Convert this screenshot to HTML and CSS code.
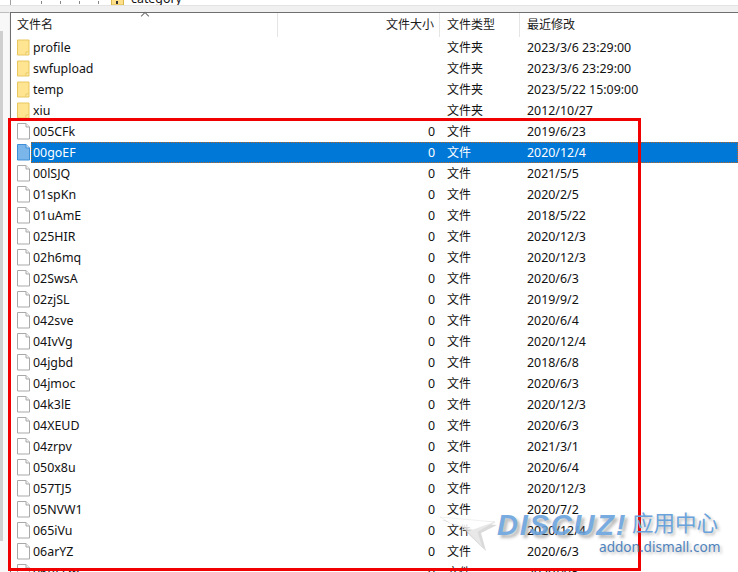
FILE: index.html
```html
<!DOCTYPE html>
<html lang="zh">
<head>
<meta charset="utf-8">
<title>文件列表</title>
<link rel="stylesheet" href="styles.css">
</head>
<body>
<svg class="defs" width="0" height="0" aria-hidden="true">
  <symbol id="folder" viewBox="0 0 13 16"><path d="M.5.5h11.500v15H.5z" fill="#ffe592" stroke="#e8c75f"/><path d="M9 15.500v-3h3" fill="#fff3c4" stroke="#e8c75f"/></symbol>
  <symbol id="file" viewBox="0 0 13 17"><path d="M.5.5h8.500l3.500 3.500v12H.5z" fill="#fff" stroke="#a9a9a9"/><path d="M9 .5v3.500h3.500" fill="#f2f2f2" stroke="#a9a9a9"/></symbol>
  <symbol id="file-sel" viewBox="0 0 13 17"><path d="M.5.5h8.500l3.500 3.500v12H.5z" fill="#7ab6ea" stroke="#3f8fd6"/><path d="M9 .5v3.500h3.500" fill="#cfe4f7" stroke="#3f8fd6"/></symbol>
</svg>

<div class="page">
  <div class="tree-strip">
    <div class="tree-dots"><i></i><i></i><i></i><i></i></div>
    <svg class="tree-folder" width="13" height="6"><rect x="0.500" y="-4" width="12" height="9" fill="#ffe08a" stroke="#d9b64c"/><rect x="5" y="1" width="2" height="3" fill="#333"/></svg>
    <span class="tree-name">category</span>
  </div>
  <div class="split-bar"></div>
  <div class="main">
    <div class="side"><div class="side-thumb"></div></div>
    <div class="list">
      <div class="header">
        <div class="hcell hname">文件名</div>
        <div class="hcell hsize">文件大小</div>
        <div class="hcell htype">文件类型</div>
        <div class="hcell hdate">最近修改</div>
      </div>
      <div class="rows">
        <div class="row"><svg class="ico"><use href="#folder"/></svg><div class="cells"><span class="name">profile</span><span class="size"></span><span class="type">文件夹</span><span class="date">2023/3/6 23:29:00</span></div></div>
        <div class="row"><svg class="ico"><use href="#folder"/></svg><div class="cells"><span class="name">swfupload</span><span class="size"></span><span class="type">文件夹</span><span class="date">2023/3/6 23:29:00</span></div></div>
        <div class="row"><svg class="ico"><use href="#folder"/></svg><div class="cells"><span class="name">temp</span><span class="size"></span><span class="type">文件夹</span><span class="date">2023/5/22 15:09:00</span></div></div>
        <div class="row"><svg class="ico"><use href="#folder"/></svg><div class="cells"><span class="name">xiu</span><span class="size"></span><span class="type">文件夹</span><span class="date">2012/10/27</span></div></div>
        <div class="row"><svg class="ico"><use href="#file"/></svg><div class="cells"><span class="name">005CFk</span><span class="size">0</span><span class="type">文件</span><span class="date">2019/6/23</span></div></div>
        <div class="row selected"><svg class="ico"><use href="#file-sel"/></svg><div class="cells"><span class="name">00goEF</span><span class="size">0</span><span class="type">文件</span><span class="date">2020/12/4</span></div></div>
        <div class="row"><svg class="ico"><use href="#file"/></svg><div class="cells"><span class="name">00lSJQ</span><span class="size">0</span><span class="type">文件</span><span class="date">2021/5/5</span></div></div>
        <div class="row"><svg class="ico"><use href="#file"/></svg><div class="cells"><span class="name">01spKn</span><span class="size">0</span><span class="type">文件</span><span class="date">2020/2/5</span></div></div>
        <div class="row"><svg class="ico"><use href="#file"/></svg><div class="cells"><span class="name">01uAmE</span><span class="size">0</span><span class="type">文件</span><span class="date">2018/5/22</span></div></div>
        <div class="row"><svg class="ico"><use href="#file"/></svg><div class="cells"><span class="name">025HIR</span><span class="size">0</span><span class="type">文件</span><span class="date">2020/12/3</span></div></div>
        <div class="row"><svg class="ico"><use href="#file"/></svg><div class="cells"><span class="name">02h6mq</span><span class="size">0</span><span class="type">文件</span><span class="date">2020/12/3</span></div></div>
        <div class="row"><svg class="ico"><use href="#file"/></svg><div class="cells"><span class="name">02SwsA</span><span class="size">0</span><span class="type">文件</span><span class="date">2020/6/3</span></div></div>
        <div class="row"><svg class="ico"><use href="#file"/></svg><div class="cells"><span class="name">02zjSL</span><span class="size">0</span><span class="type">文件</span><span class="date">2019/9/2</span></div></div>
        <div class="row"><svg class="ico"><use href="#file"/></svg><div class="cells"><span class="name">042sve</span><span class="size">0</span><span class="type">文件</span><span class="date">2020/6/4</span></div></div>
        <div class="row"><svg class="ico"><use href="#file"/></svg><div class="cells"><span class="name">04IvVg</span><span class="size">0</span><span class="type">文件</span><span class="date">2020/12/4</span></div></div>
        <div class="row"><svg class="ico"><use href="#file"/></svg><div class="cells"><span class="name">04jgbd</span><span class="size">0</span><span class="type">文件</span><span class="date">2018/6/8</span></div></div>
        <div class="row"><svg class="ico"><use href="#file"/></svg><div class="cells"><span class="name">04jmoc</span><span class="size">0</span><span class="type">文件</span><span class="date">2020/6/3</span></div></div>
        <div class="row"><svg class="ico"><use href="#file"/></svg><div class="cells"><span class="name">04k3lE</span><span class="size">0</span><span class="type">文件</span><span class="date">2020/12/3</span></div></div>
        <div class="row"><svg class="ico"><use href="#file"/></svg><div class="cells"><span class="name">04XEUD</span><span class="size">0</span><span class="type">文件</span><span class="date">2020/6/3</span></div></div>
        <div class="row"><svg class="ico"><use href="#file"/></svg><div class="cells"><span class="name">04zrpv</span><span class="size">0</span><span class="type">文件</span><span class="date">2021/3/1</span></div></div>
        <div class="row"><svg class="ico"><use href="#file"/></svg><div class="cells"><span class="name">050x8u</span><span class="size">0</span><span class="type">文件</span><span class="date">2020/6/4</span></div></div>
        <div class="row"><svg class="ico"><use href="#file"/></svg><div class="cells"><span class="name">057TJ5</span><span class="size">0</span><span class="type">文件</span><span class="date">2020/12/3</span></div></div>
        <div class="row"><svg class="ico"><use href="#file"/></svg><div class="cells"><span class="name">05NVW1</span><span class="size">0</span><span class="type">文件</span><span class="date">2020/7/2</span></div></div>
        <div class="row"><svg class="ico"><use href="#file"/></svg><div class="cells"><span class="name">065iVu</span><span class="size">0</span><span class="type">文件</span><span class="date">2020/12/4</span></div></div>
        <div class="row"><svg class="ico"><use href="#file"/></svg><div class="cells"><span class="name">06arYZ</span><span class="size">0</span><span class="type">文件</span><span class="date">2020/6/3</span></div></div>
        <div class="row"><svg class="ico"><use href="#file"/></svg><div class="cells"><span class="name">06BFFm</span><span class="size">0</span><span class="type">文件</span><span class="date">2020/4/5</span></div></div>
      </div>
    </div>
  </div>

  <div class="sort-caret"></div>
  <div class="red-box"></div>

  <div class="watermark">
    <svg class="plane" width="62" height="46" viewBox="0 0 62 46">
      <path d="M2 12 57 17 41 25 46 43 21 19z" fill="#6f6f6f" opacity=".3"/>
      <path d="M18 14 43 40 38 24 55 14z" fill="#e4e4e4" stroke="#cfcfcf" stroke-width=".5"/>
      <path d="M0 9 55 14 33 22 10 15z" fill="#fff" stroke="#dcdcdc" stroke-width=".5"/>
    </svg>
    <span class="wm-brand">DISCUZ!</span>
    <span class="wm-cn">应用中心</span>
    <span class="wm-url">addon.dismall.com</span>
  </div>
</div>
</body>
</html>
```
FILE: styles.css
```css
* { box-sizing: border-box; }
html, body { margin: 0; padding: 0; }
body {
  width: 738px;
  height: 572px;
  overflow: hidden;
  background: #fff;
  font-family: "Noto Sans", "Noto Sans CJK SC", sans-serif;
  font-size: 12.400px;
  color: #111;
}
.defs { position: absolute; }
.page { position: relative; width: 738px; height: 572px; overflow: hidden; }

.tree-strip {
  height: 5px;
  margin-left: 10px;
  border-left: 1px solid #a0a0a0;
  display: flex;
  overflow: hidden;
  background: #fff;
}
.tree-dots { display: flex; gap: 18px; margin-left: 30px; padding-top: 1px; width: 70px; }
.tree-dots i { width: 1px; height: 3px; background: #888; flex: none; }
.tree-folder { flex: none; }
.tree-name { margin-left: 7px; margin-top: -9px; line-height: 16px; height: 16px; }

.split-bar {
  height: 7px;
  background: #f0f0f0;
  border-top: 1px solid #e3e3e3;
}

.main { display: flex; height: 560px; }
.side {
  width: 10px;
  flex: none;
  background: #f8f8f8;
  border-right: 1px solid #f0f0f0;
  border-top: 1px solid #bdbdbd;
}
.side-thumb { width: 3px; height: 510px; margin-top: 18px; background: #cfcfcf; }

.list {
  flex: 1;
  min-width: 0;
  border-top: 1px solid #6f6f6f;
  border-left: 1px solid #6f6f6f;
}
.header {
  display: grid;
  grid-template-columns: 267px 162px 80px 1fr;
  height: 24px;
  line-height: 24px;
  font-size: 12px;
  color: #1a1a1a;
}
.hcell { border-right: 1px solid #e5e5e5; height: 24px; }
.hname { padding-left: 6px; }
.hsize { text-align: right; padding-right: 5px; }
.htype { padding-left: 7px; }
.hdate { padding-left: 7px; border-right: 0; }

.row {
  display: flex;
  height: 21px;
  padding-left: 6px;
  align-items: center;
}
.ico { width: 13px; height: 17px; flex: none; margin-right: 1px; }
.cells {
  flex: 1;
  min-width: 0;
  height: 21px;
  line-height: 21px;
  display: grid;
  grid-template-columns: 247px 162px 80px 1fr;
  white-space: nowrap;
}
.name { padding-left: 2px; }
.size { text-align: right; padding-right: 5px; }
.type { padding-left: 7px; font-size: 12px; }
.date { padding-left: 7px; }
.selected .cells {
  background: #0078d7;
  color: #fff;
  outline: 1px dotted #b5651d;
  outline-offset: -1px;
}

.sort-caret {
  position: absolute;
  left: 142px;
  top: 13px;
  width: 6px;
  height: 6px;
  border-top: 1px solid #6d6d6d;
  border-left: 1px solid #6d6d6d;
  transform: rotate(45deg);
}
.red-box {
  position: absolute;
  left: 8px;
  top: 118px;
  width: 633px;
  height: 453px;
  border: 3px solid #f00000;
  pointer-events: none;
}

.watermark { position: absolute; left: 0; top: 0; width: 738px; height: 572px; pointer-events: none; }
.plane { position: absolute; left: 440px; top: 508px; opacity: .85; }
.wm-brand {
  position: absolute;
  left: 497px;
  top: 505px;
  font-family: "Liberation Sans", sans-serif;
  font-size: 29px;
  font-weight: 700;
  font-style: italic;
  letter-spacing: 1.800px;
  line-height: 40px;
  color: #6aa3dc;
  opacity: .9;
  text-shadow: 3px 3px 3px rgba(90, 90, 90, .45);
  white-space: nowrap;
}
.wm-cn {
  position: absolute;
  left: 632px;
  top: 508px;
  font-size: 21.500px;
  line-height: 30px;
  color: #6aa3dc;
  text-shadow: 2px 2px 3px rgba(90, 90, 90, .45);
  white-space: nowrap;
}
.wm-url {
  position: absolute;
  left: 599px;
  top: 537px;
  font-size: 13.600px;
  line-height: 20px;
  color: #4f83bd;
  text-shadow: 2px 2px 3px rgba(90, 90, 90, .4);
  white-space: nowrap;
}
```
